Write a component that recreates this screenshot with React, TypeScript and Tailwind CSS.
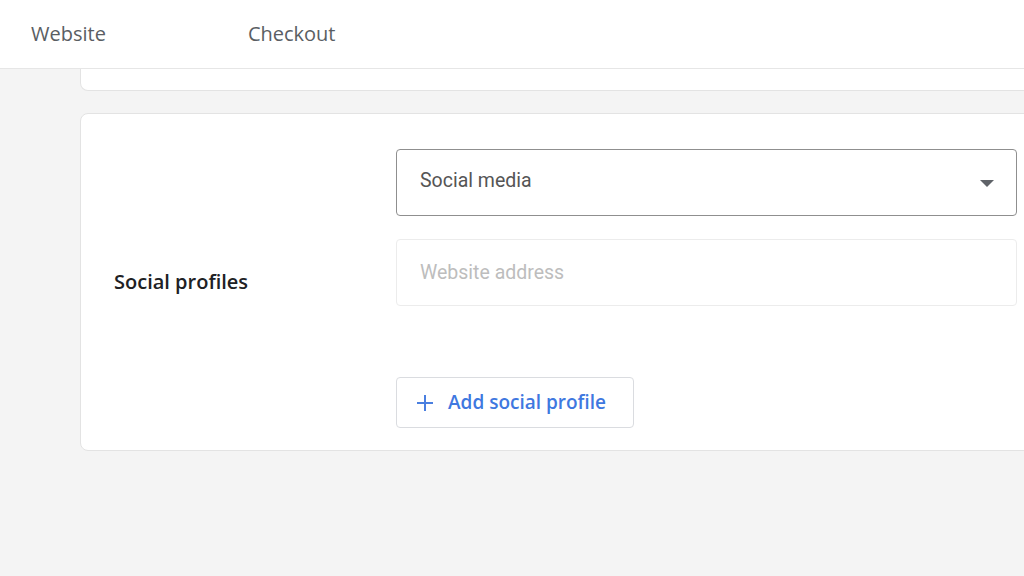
const TABS = ["Website", "Checkout"];

export default function App() {
  return (
    <div className="flex h-[576px] w-[1024px] flex-col overflow-hidden bg-[#f4f4f4]">
      <header className="flex h-[69px] shrink-0 items-center border-b border-[#e6e6e6] bg-white">
        {TABS.map((tab, i) => (
          <span
            key={tab}
            className={`font-['Open_Sans',sans-serif] text-[20px] font-medium text-[#5a5e63] ${i === 0 ? "ml-[31px]" : "ml-[142px]"}`}
          >
            {tab}
          </span>
        ))}
      </header>
      <main className="flex flex-col gap-[22px] pl-[80px]">
        <div className="h-[22px] w-[1000px] rounded-b-[8px] border border-t-0 border-[#e3e3e3] bg-white" />
        <SocialProfilesCard />
      </main>
    </div>
  );
}

function SocialProfilesCard() {
  return (
    <section className="flex h-[338px] w-[1000px] rounded-[8px] border border-[#e3e3e3] bg-white">
      <div className="flex w-[315px] shrink-0 items-center pl-[33px]">
        <h2 className="font-['Open_Sans',sans-serif] text-[20px] font-semibold text-[#202124]">Social profiles</h2>
      </div>
      <div className="flex flex-col pt-[35px]">
        <button className="flex h-[67px] w-[621px] items-center justify-between rounded-[4px] border border-[#8f8f8f] pl-[23px] pr-[22px] text-left">
          <span className="mb-[4px] font-['Roboto',sans-serif] text-[19.5px] text-[#555555]">Social media</span>
          <svg width="14" height="8" viewBox="0 0 14 8" className="mt-[2px]">
            <path d="M0 0h14L7 7z" fill="#5f6368" />
          </svg>
        </button>
        <div className="mt-[23px] flex h-[67px] w-[621px] items-center rounded-[4px] border border-[#ececec] pl-[23px]">
          <span className="font-['Roboto',sans-serif] text-[19.5px] text-[#bdbdbd]">Website address</span>
        </div>
        <button className="mt-[71px] flex h-[51px] w-[238px] items-center gap-[14px] rounded-[4px] border border-[#dadce0] pl-[19px]">
          <svg width="18" height="18" viewBox="0 0 18 18" className="shrink-0">
            <path d="M9 1v16M1 9h16" stroke="#4a7fe0" strokeWidth="2" fill="none" />
          </svg>
          <span className="font-['Open_Sans',sans-serif] text-[19px] font-semibold text-[#3f78e0]">Add social profile</span>
        </button>
      </div>
    </section>
  );
}
